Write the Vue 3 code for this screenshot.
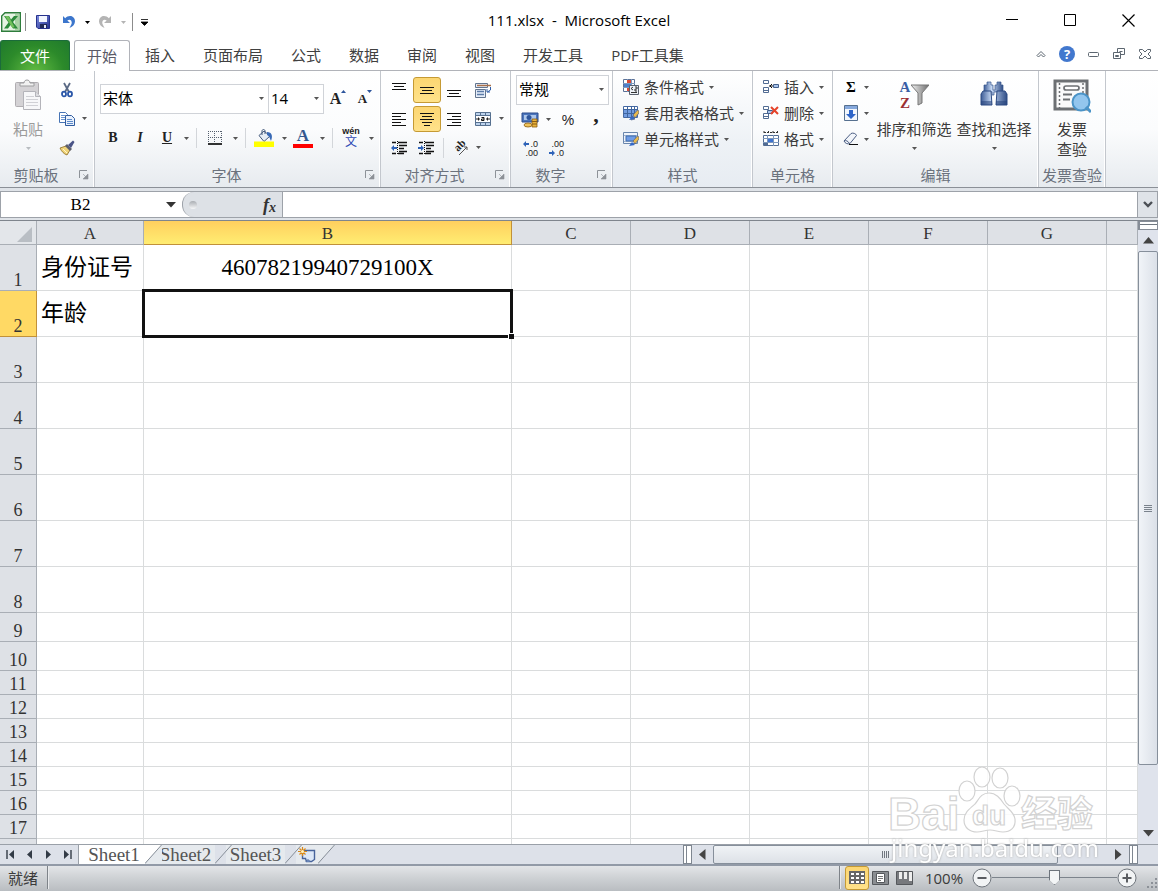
<script setup>
import { ref } from 'vue'

const tabs = ['插入', '页面布局', '公式', '数据', '审阅', '视图', '开发工具', 'PDF工具集']
const columns = ['A', 'B', 'C', 'D', 'E', 'F', 'G', '']
const rows = Array.from({ length: 18 }, (_, i) => ({
  n: i + 1,
  label: i < 17 ? i + 1 : '',
  size: i < 8 ? 'tall' : i < 10 ? 'medium' : 'short',
}))
const cells = { A1: '身份证号', B1: '46078219940729100X', A2: '年龄' }
const styleTools = [
  { icon: 'i-cond', label: '条件格式' },
  { icon: 'i-tablefmt', label: '套用表格格式' },
  { icon: 'i-cellstyle', label: '单元格样式' },
]
const cellTools = [
  { icon: 'i-insert', label: '插入' },
  { icon: 'i-delete', label: '删除' },
  { icon: 'i-format', label: '格式' },
]
const nameBox = ref('B2')
const formula = ref('')
const zoom = ref(50)
</script>

<template>
  <div class="window">
    <svg class="defs" aria-hidden="true">
      <defs>
        <linearGradient id="g-barrel" x1="0" y1="0" x2="1" y2="0"><stop offset="0" stop-color="#3d5c96" /><stop offset=".4" stop-color="#c5d8f4" /><stop offset="1" stop-color="#2f4d86" /></linearGradient>
        <linearGradient id="g-funnel" x1="0" y1="0" x2="1" y2="0"><stop offset="0" stop-color="#f2f2f2" /><stop offset="1" stop-color="#6c6c6c" /></linearGradient>
        <linearGradient id="g-save" x1="0" y1="0" x2="1" y2="1"><stop offset="0" stop-color="#7f8ee0" /><stop offset="1" stop-color="#23318f" /></linearGradient>
      </defs>
      <symbol id="i-caret" viewBox="0 0 5 3"><path d="M0 0h5L2.500 3z" fill="currentColor" /></symbol>
      <symbol id="i-launch" viewBox="0 0 10 10"><path d="M.5 8V.5H8" fill="none" stroke="#8d9298" /><path d="M4 4l3 3M9 4v5H4z" fill="#8d9298" stroke="#8d9298" stroke-width=".6" /></symbol>
      <symbol id="i-excel" viewBox="0 0 20 20">
        <path d="M4 .7h15.300v18.600H.7V4z" fill="#e6f3e3" stroke="#2e7d3c" stroke-width="1.400" />
        <path d="M14 2h4v16h-4z" fill="#a9d3a5" />
        <path d="M3 4h5l2 3.500L13 4h4l-5 6 5 6.500h-5L9.500 13 7 16.500H3l4.500-6z" fill="#2c8a3b" />
        <path d="M4 4h3.500l6 11-2 1z" fill="#72bf5c" />
      </symbol>
      <symbol id="i-save" viewBox="0 0 14 14">
        <path d="M.5.5h13v13H2L.5 12z" fill="url(#g-save)" stroke="#27328c" />
        <path d="M3 1h8v6H3z" fill="#f3f6ff" /><path d="M4 9h7v4H4z" fill="#222a55" /><path d="M8 10h2v3H8z" fill="#e6e9f7" />
      </symbol>
      <symbol id="i-undo" viewBox="0 0 14 14"><path d="M1 1v7h7L5.300 5.500C8 3.500 10.500 5.500 9.500 9L7.500 13c5-1.500 6.800-6.500 4.500-10C10 0 5.500.4 3.200 3.300z" fill="currentColor" /></symbol>
      <symbol id="i-cut" viewBox="0 0 16 16">
        <path d="M5 1l5 9M11 1L6 10" stroke="#5b6a85" stroke-width="1.800" fill="none" />
        <ellipse cx="5" cy="12" rx="2" ry="2.400" fill="none" stroke="#2a56a8" stroke-width="1.800" /><ellipse cx="11" cy="12" rx="2" ry="2.400" fill="none" stroke="#2a56a8" stroke-width="1.800" />
      </symbol>
      <symbol id="i-copy" viewBox="0 0 16 16">
        <path d="M.5 1.500h6l2 2v8h-8z" fill="#fff" stroke="#4774b5" /><path d="M2 4.500h4M2 6.500h4M2 8.500h4" stroke="#6c95cf" />
        <path d="M6.500 4.500h6l3 3v7h-9z" fill="#e9f1fc" stroke="#315c9f" /><path d="M8 8.500h5M8 10.500h6M8 12.500h6" stroke="#5d8aca" />
      </symbol>
      <symbol id="i-brush" viewBox="0 0 16 16">
        <path d="M1 8l6-2 4 4-3 5c-3-1-5.500-3.500-7-7z" fill="#f0d479" stroke="#8a6b23" stroke-width=".8" />
        <path d="M6 6l2-2 5 5-2 2z" fill="#5c5f6d" /><path d="M9 5l5-4.500 1.500 1.500L12 8z" fill="#4a5487" /><path d="M4 9l4 4" stroke="#fff6ce" />
      </symbol>
      <symbol id="i-paste" viewBox="0 0 28 32">
        <rect x="1.500" y="3.500" width="23" height="24" rx="1" fill="#d4d2d5" stroke="#b0adb1" />
        <path d="M6 7V4h4c0-4 6-4 6 0h4v3z" fill="#f1f1f1" stroke="#9d9d9f" />
        <path d="M9.500 12.500h12l5 5v13h-17z" fill="#f7f7f9" stroke="#b4b4ba" /><path d="M21.500 12.500v5h5" fill="#dcdce0" stroke="#b4b4ba" />
        <path d="M12 17.500h8M12 20.500h12M12 23.500h12M12 26.500h12" stroke="#d0d0d5" />
      </symbol>
      <symbol id="i-up" viewBox="0 0 5 3"><path d="M0 3h5L2.500 0z" fill="#2d559c" /></symbol>
      <symbol id="i-border" viewBox="0 0 14 14"><path d="M0 .5h14M0 6.500h14M.5 0v12M6.500 0v12M13.500 0v12" stroke="#55606e" stroke-dasharray="1 1" /><path d="M0 13h14" stroke="#000" stroke-width="1.600" /></symbol>
      <symbol id="i-fill" viewBox="0 0 20 18">
        <path d="M5 6.500L10 2l6 5-6 5.500z" fill="#e6edf5" stroke="#43597a" /><path d="M8 6V2c0-2 3-2 3 0v3" fill="none" stroke="#43597a" />
        <path d="M13 3c5 0 6 4 4 9-1.500-3-1.500-5-4-6z" fill="#3869b5" /><path d="M0 12.500h20V18H0z" fill="#ffff00" />
      </symbol>
      <symbol id="i-lines-c" viewBox="0 0 14 14"><path d="M0 1.500h14M2 4.500h10M0 7.500h14M2 10.500h10M4 13.500h6" stroke="#111" /></symbol>
      <symbol id="i-lines-l" viewBox="0 0 14 14"><path d="M0 1.500h14M0 4.500h9M0 7.500h14M0 10.500h9M0 13.500h14" stroke="#111" /></symbol>
      <symbol id="i-lines-r" viewBox="0 0 14 14"><path d="M0 1.500h14M5 4.500h9M0 7.500h14M5 10.500h9M0 13.500h14" stroke="#111" /></symbol>
      <symbol id="i-top" viewBox="0 0 14 14"><path d="M0 .5h14M2 3.500h10M0 6.500h14" stroke="#111" /></symbol>
      <symbol id="i-mid" viewBox="0 0 14 14"><path d="M0 4.500h14M2 7.500h10M0 10.500h14" stroke="#111" /></symbol>
      <symbol id="i-bot" viewBox="0 0 14 14"><path d="M0 7.500h14M2 10.500h10M0 13.500h14" stroke="#111" /></symbol>
      <symbol id="i-wrap" viewBox="0 0 16 16">
        <path d="M.5 1.500h12v4H.5z" fill="#e6eefa" stroke="#63758f" /><path d="M2 3.500h14" stroke="#a9704a" stroke-width="1.500" /><path d="M.5 7.500h10v8H.5z" fill="#e6eefa" stroke="#63758f" />
        <path d="M2 9.500h7M2 12.500h7" stroke="#5c7ba8" stroke-width="1.500" /><path d="M15.500 5v3l-3 2M12 7v3h3" fill="none" stroke="#2f5da8" />
      </symbol>
      <symbol id="i-merge" viewBox="0 0 16 16">
        <path d="M.5 1.500h15v13H.5z" fill="#bcd2ec" stroke="#56708f" /><path d="M1 5h14v6H1z" fill="#fff" /><path d="M5.500 2v3M10.500 2v3M5.500 11v3M10.500 11v3M1 4.500h14M1 11.500h14" stroke="#56708f" />
        <path d="M1 8h3M12 8h3" stroke="#222" /><path d="M3 6l2 2-2 2zM13 6l-2 2 2 2z" fill="#222" /><path d="M6.500 6.500h2.500v3H6.500V8H9" fill="none" stroke="#111" />
      </symbol>
      <symbol id="i-outdent" viewBox="0 0 16 14"><path d="M1 1.500h4M7 1.500h9M8 4.500h8M8 7.500h5M8 10.500h8M1 12.500h4M7 12.500h6" stroke="#111" stroke-width="1.400" /><path d="M6.500 0v14" stroke="#111" stroke-dasharray="1 1" /><path d="M0 7l3-3v2h3v2H3v2z" fill="#2e63b8" /></symbol>
      <symbol id="i-indent" viewBox="0 0 16 14"><path d="M1 1.500h4M7 1.500h9M8 4.500h8M8 7.500h5M8 10.500h8M1 12.500h4M7 12.500h6" stroke="#111" stroke-width="1.400" /><path d="M6.500 0v14" stroke="#111" stroke-dasharray="1 1" /><path d="M6 7L3 4v2H0v2h3v2z" fill="#2e63b8" /></symbol>
      <symbol id="i-money" viewBox="0 0 18 18">
        <path d="M1 2h16v9H1z" fill="#4c76bd" stroke="#2a4a8c" /><path d="M3 4h12v5H3z" fill="#adc6ea" /><ellipse cx="8" cy="6.500" rx="2.500" ry="2.500" fill="#2d559c" />
        <path d="M11 8h5v8h-5z" fill="#e9b33c" stroke="#8a5d12" stroke-width=".8" /><path d="M11 10.500h5M11 13h5" stroke="#8a5d12" /><ellipse cx="7" cy="14" rx="4" ry="2" fill="#eec25a" stroke="#8a5d12" stroke-width=".8" />
      </symbol>
      <symbol id="i-left" viewBox="0 0 6 6"><path d="M0 3l3-3v2h3v2H3v2z" fill="#2e63b8" /></symbol>
      <symbol id="i-right" viewBox="0 0 6 6"><path d="M6 3L3 0v2H0v2h3v2z" fill="#2e63b8" /></symbol>
      <symbol id="i-cond" viewBox="0 0 16 16">
        <path d="M.5.5h11v12H.5z" fill="#fff" stroke="#5b7196" /><path d="M4.500 0v13M8.500 0v13M0 4.500h12M0 8.500h12" stroke="#7e9abf" /><path d="M4 1h4v3H4zM4 9h3v3H4z" fill="#d94a35" /><path d="M1 5h7v3H1z" fill="#4d7fcb" />
        <path d="M6.500 6.500h9v9h-9z" fill="#edf1f7" stroke="#59616e" /><path d="M10 8l-2 1.500 2 1.500M12 8h2v2h-2v2h2M8 13.500h6" fill="none" stroke="#333" />
      </symbol>
      <symbol id="i-tablefmt" viewBox="0 0 16 16">
        <path d="M.5 1.500h14v11H.5z" fill="#fff" stroke="#4468a3" /><path d="M1 5h13v7H1z" fill="#709be0" /><path d="M4.500 1v12M8.500 1v12M11.500 1v12M0 4.500h15M0 8.500h15" stroke="#3f659f" />
        <path d="M8 15l1-4 3 3zM10 10l4.500-5 1.500 1v2l-4 5z" fill="#e9b94c" stroke="#4d5e80" stroke-width=".7" /><path d="M6 15l3-4 3 3z" fill="#3267c8" />
      </symbol>
      <symbol id="i-cellstyle" viewBox="0 0 16 16">
        <path d="M.5 1.500h14v11H.5z" fill="#eff4fb" stroke="#6986ad" /><path d="M1 4.500h13M1 10.500h13" stroke="#9eb2cc" /><path d="M3 5h10v5H3z" fill="#6f9ce5" stroke="#3f6cae" />
        <path d="M10 10l4.500-5 1.500 1v2l-4 5z" fill="#e9b94c" stroke="#4d5e80" stroke-width=".7" /><path d="M6 15l3-4 3 3z" fill="#3267c8" />
      </symbol>
      <symbol id="i-insert" viewBox="0 0 16 16"><path d="M.5 1.500h5v3h-5zM.5 8.500h5v5h-5zM.5 11.500h5" fill="#fff" stroke="#526c93" /><path d="M10.500 5.500h5v3h-5z" fill="#a9c4ec" stroke="#44618c" /><path d="M6 7h4M9 5L7 7l2 2" fill="none" stroke="#111" /></symbol>
      <symbol id="i-delete" viewBox="0 0 16 16"><path d="M.5 1.500h5v3h-5zM.5 8.500h5v5h-5zM.5 11.500h5" fill="#fff" stroke="#526c93" /><path d="M4.500 5.500h5v3h-5z" fill="#a9c4ec" stroke="#44618c" /><path d="M8 2l7 7M15 2L8 9" stroke="#e5432a" stroke-width="2" /></symbol>
      <symbol id="i-format" viewBox="0 0 16 16"><path d="M1 0v3M5.500 0v3M10 0v3M14.500 0v3M1 1.500h14" stroke="#333" stroke-dasharray="2 1" /><path d="M.5 4.500h15v10H.5z" fill="#fff" stroke="#526c93" /><path d="M4.500 4v11M10.500 4v11M0 7.500h16M0 11.500h16" stroke="#7d97bb" /><path d="M5 8h5v3H5z" fill="#3f74d0" /><path d="M1 12h4v3H1z" fill="#526c93" /></symbol>
      <symbol id="i-filldown" viewBox="0 0 14 16"><path d="M.5.5h13v15H.5z" fill="#f2f6fc" stroke="#56708f" /><path d="M1 1h12v3H1z" fill="#86a9dd" /><path d="M5 5h4v4h3l-5 5-5-5h3z" fill="#2e65c9" /></symbol>
      <symbol id="i-eraser" viewBox="0 0 16 14"><path d="M1 9l7-7.500c2-1 5 0 5.500 2L7 11.500c-2 1-5 0-6-2.500z" fill="#f2f5fa" stroke="#4a5d83" /><path d="M1 9c2-1 4 0 5.500 2.500" fill="none" stroke="#4a5d83" /><path d="M6 12.500h9" stroke="#111" /></symbol>
      <symbol id="i-funnel" viewBox="0 0 18 22"><path d="M0 1h18l-7 8v10l-4 2V9z" fill="url(#g-funnel)" stroke="#777" /></symbol>
      <symbol id="i-binoc" viewBox="0 0 28 26">
        <path d="M7 1h4v3h2v5h2V4h2V1h4v3h2v7h-9v3h-2v-3H4V4h3z" fill="url(#g-barrel)" stroke="#38578e" stroke-width=".7" />
        <path d="M3 10h8l1 14H1V13zM17 10h8l2 3v11H16z" fill="url(#g-barrel)" stroke="#2d4b83" /><path d="M1 20h11v4H1zM16 20h11v4H16z" fill="#27447c" opacity=".55" />
      </symbol>
      <symbol id="i-invoice" viewBox="0 0 38 34">
        <path d="M2 2h32v28H2z" fill="#fafafa" stroke="#6d7073" stroke-width="3" /><path d="M6.500 4v25M30 4v12" stroke="#6d7073" stroke-width="1.500" stroke-dasharray="2 2" />
        <rect x="11" y="7" width="15" height="4" rx="2" fill="#fff" stroke="#6d7073" stroke-width="1.700" /><path d="M10 15.500h9M10 20.500h7" stroke="#6d7073" stroke-width="2" />
        <circle cx="28" cy="23" r="8.500" fill="#93c6ee" stroke="#4b94c8" stroke-width="2" /><path d="M33 28l5 5" stroke="#4b94c8" stroke-width="3" />
      </symbol>
    </svg>

    <header class="titlebar">
      <div class="quick">
        <svg class="excel"><use href="#i-excel" /></svg>
        <i class="qsep"></i>
        <button class="q" aria-label="保存"><svg class="s14"><use href="#i-save" /></svg></button>
        <button class="q blue" aria-label="撤消"><svg class="s14"><use href="#i-undo" /></svg></button>
        <button class="qc" aria-label="撤消列表"><svg class="caret"><use href="#i-caret" /></svg></button>
        <button class="q grey" aria-label="恢复"><svg class="s14 flip"><use href="#i-undo" /></svg></button>
        <button class="qc grey" aria-label="恢复列表"><svg class="caret"><use href="#i-caret" /></svg></button>
        <i class="qsep"></i>
        <button class="qc bar" aria-label="自定义快速访问工具栏"><svg width="7" height="7"><path d="M0 .5h7M0 3h7L3.500 6.500z" fill="#000" stroke="#000" stroke-width=".8" /></svg></button>
      </div>
      <div class="title">111.xlsx&nbsp; -&nbsp; Microsoft Excel</div>
      <div class="winbtns">
        <button aria-label="最小化"><svg width="13" height="13"><path d="M0 5.500h12" stroke="#000" /></svg></button>
        <button aria-label="最大化"><svg width="13" height="13"><path d="M.5.5h11v11H.5z" fill="none" stroke="#000" /></svg></button>
        <button aria-label="关闭"><svg width="13" height="13"><path d="M.5.5l12 12M12.500.5l-12 12" stroke="#000" stroke-width="1.200" /></svg></button>
      </div>
    </header>

    <nav class="tabs">
      <button class="file">文件</button>
      <button class="tab active">开始</button>
      <button v-for="t in tabs" :key="t" class="tab">{{ t }}</button>
      <div class="tabright">
        <button aria-label="功能区最小化"><svg width="10" height="8"><path d="M1 5.500l4-4 4 4-1.500 1.500L5 4.500 2.500 7z" fill="#fff" stroke="#5c6670" /></svg></button>
        <button aria-label="帮助" class="help">?</button>
        <button aria-label="最小化工作簿"><svg width="11" height="8"><rect x=".5" y="2.500" width="10" height="4" rx="1" fill="#fff" stroke="#5c6670" /></svg></button>
        <button aria-label="还原工作簿"><svg width="12" height="12"><path d="M4.500.5h7v6h-7zM6.500 3.500h3" fill="#fff" stroke="#5c6670" /><path d="M.5 4.500h7v6h-7z" fill="#fff" stroke="#5c6670" /><path d="M2.500 7.500h3v1h-3z" fill="none" stroke="#5c6670" /></svg></button>
        <button aria-label="关闭工作簿"><svg width="12" height="10"><path d="M.5.5h3L6 3 8.500.5h3v2L9 5l2.500 2.500v2h-3L6 7 3.500 9.500h-3v-2L3 5 .5 2.500z" fill="#fff" stroke="#5c6670" /></svg></button>
      </div>
    </nav>

    <section class="ribbon">
      <div class="group g-clip">
        <div class="body">
          <button class="big paste"><svg class="pasteicon"><use href="#i-paste" /></svg><span>粘贴</span><svg class="caret"><use href="#i-caret" /></svg></button>
          <div class="clipcol">
            <div class="line"><button class="t26" aria-label="剪切"><svg class="s16"><use href="#i-cut" /></svg></button></div>
            <div class="line"><button class="t26" aria-label="复制"><svg class="s16"><use href="#i-copy" /></svg></button><button class="tc narrow" aria-label="复制选项"><svg class="caret"><use href="#i-caret" /></svg></button></div>
            <div class="line"><button class="t26" aria-label="格式刷"><svg class="s16"><use href="#i-brush" /></svg></button></div>
          </div>
        </div>
        <div class="cap"><span>剪贴板</span><button aria-label="剪贴板选项"><svg class="launch"><use href="#i-launch" /></svg></button></div>
      </div>

      <div class="group g-font">
        <div class="body fontbody">
          <div class="line combos">
            <label class="combo fontname"><select aria-label="字体"><option>宋体</option></select><svg class="caret"><use href="#i-caret" /></svg></label>
            <label class="combo fontsize"><select aria-label="字号"><option>14</option></select><svg class="caret"><use href="#i-caret" /></svg></label>
            <button class="t28 serif grow" aria-label="增大字号">A<svg class="up"><use href="#i-up" /></svg></button>
            <button class="t26 serif shrink" aria-label="减小字号">A<svg class="up down"><use href="#i-up" /></svg></button>
          </div>
          <div class="line fontline">
            <button class="t26 serif b">B</button>
            <button class="t28 serif it">I</button>
            <button class="t26 serif u">U</button>
            <button class="tc" aria-label="下划线选项"><svg class="caret"><use href="#i-caret" /></svg></button>
            <i class="vsep"></i>
            <button class="t28" aria-label="边框"><svg class="s14"><use href="#i-border" /></svg></button>
            <button class="tc" aria-label="边框选项"><svg class="caret"><use href="#i-caret" /></svg></button>
            <i class="vsep"></i>
            <button class="t28" aria-label="填充颜色"><svg class="fillicon"><use href="#i-fill" /></svg></button>
            <button class="tc" aria-label="填充颜色选项"><svg class="caret"><use href="#i-caret" /></svg></button>
            <button class="t26" aria-label="字体颜色"><span class="fontcolor">A</span></button>
            <button class="tc" aria-label="字体颜色选项"><svg class="caret"><use href="#i-caret" /></svg></button>
            <i class="vsep"></i>
            <button class="t28 wen" aria-label="拼音"><span>wén</span><b>文</b></button>
            <button class="tc" aria-label="拼音选项"><svg class="caret"><use href="#i-caret" /></svg></button>
          </div>
        </div>
        <div class="cap"><span>字体</span><button aria-label="字体选项"><svg class="launch"><use href="#i-launch" /></svg></button></div>
      </div>

      <div class="group g-align">
        <div class="body alignbody">
          <div class="line">
            <button class="t28" aria-label="顶端对齐"><svg class="s14"><use href="#i-top" /></svg></button>
            <button class="t28 on" aria-label="垂直居中"><svg class="s14"><use href="#i-mid" /></svg></button>
            <button class="t26" aria-label="底端对齐"><svg class="s14"><use href="#i-bot" /></svg></button>
            <button class="t28 apart" aria-label="自动换行"><svg class="s16"><use href="#i-wrap" /></svg></button>
          </div>
          <div class="line">
            <button class="t28" aria-label="左对齐"><svg class="s14"><use href="#i-lines-l" /></svg></button>
            <button class="t28 on" aria-label="居中"><svg class="s14"><use href="#i-lines-c" /></svg></button>
            <button class="t26" aria-label="右对齐"><svg class="s14"><use href="#i-lines-r" /></svg></button>
            <button class="t28 apart" aria-label="合并后居中"><svg class="s16"><use href="#i-merge" /></svg></button>
            <button class="tc narrow" aria-label="合并选项"><svg class="caret"><use href="#i-caret" /></svg></button>
          </div>
          <div class="line">
            <button class="t28" aria-label="减少缩进量"><svg class="indent"><use href="#i-outdent" /></svg></button>
            <button class="t26" aria-label="增加缩进量"><svg class="indent"><use href="#i-indent" /></svg></button>
            <i class="vsep"></i>
            <button class="t26" aria-label="方向"><svg width="18" height="18" overflow="visible"><text transform="translate(6 13) rotate(-45)" font-size="11" font-weight="bold" font-family="Liberation Serif, serif" fill="#222">ab</text><path d="M7 16L15 8M12 8h3v3" fill="none" stroke="#555" /></svg></button>
            <button class="tc narrow" aria-label="方向选项"><svg class="caret"><use href="#i-caret" /></svg></button>
          </div>
        </div>
        <div class="cap"><span>对齐方式</span><button aria-label="对齐选项"><svg class="launch"><use href="#i-launch" /></svg></button></div>
      </div>

      <div class="group g-num">
        <div class="body numbody">
          <label class="combo numfmt"><select aria-label="数字格式"><option>常规</option></select><svg class="caret"><use href="#i-caret" /></svg></label>
          <div class="line">
            <button class="t28" aria-label="会计数字格式"><svg class="s18"><use href="#i-money" /></svg></button>
            <button class="tc narrow" aria-label="会计格式选项"><svg class="caret"><use href="#i-caret" /></svg></button>
            <button class="t28 apart pct">%</button>
            <button class="t28 comma serif">,</button>
          </div>
          <div class="line">
            <button class="t26 dec" aria-label="增加小数位数"><span><svg class="arr"><use href="#i-left" /></svg>.0</span><span>.00</span></button>
            <button class="t26 dec" aria-label="减少小数位数"><span>.00</span><span><svg class="arr"><use href="#i-right" /></svg>.0</span></button>
          </div>
        </div>
        <div class="cap"><span>数字</span><button aria-label="数字选项"><svg class="launch"><use href="#i-launch" /></svg></button></div>
      </div>

      <div class="group g-style">
        <div class="body list">
          <button v-for="s in styleTools" :key="s.label" class="item"><svg class="s16"><use :href="'#' + s.icon" /></svg><span>{{ s.label }}</span><svg class="caret"><use href="#i-caret" /></svg></button>
        </div>
        <div class="cap"><span>样式</span></div>
      </div>

      <div class="group g-cell">
        <div class="body list">
          <button v-for="s in cellTools" :key="s.label" class="item"><svg class="s16"><use :href="'#' + s.icon" /></svg><span>{{ s.label }}</span><svg class="caret"><use href="#i-caret" /></svg></button>
        </div>
        <div class="cap"><span>单元格</span></div>
      </div>

      <div class="group g-edit">
        <div class="body">
          <div class="list editlist">
            <button class="item" aria-label="自动求和"><b class="sigma">Σ</b><svg class="caret"><use href="#i-caret" /></svg></button>
            <button class="item" aria-label="填充"><svg class="s16"><use href="#i-filldown" /></svg><svg class="caret"><use href="#i-caret" /></svg></button>
            <button class="item" aria-label="清除"><svg class="s16"><use href="#i-eraser" /></svg><svg class="caret"><use href="#i-caret" /></svg></button>
          </div>
          <button class="big wide"><span class="sort"><span class="az"><b>A</b><b class="z">Z</b></span><svg class="funnel"><use href="#i-funnel" /></svg></span><span>排序和筛选</span><svg class="caret"><use href="#i-caret" /></svg></button>
          <button class="big wide"><svg class="binoc"><use href="#i-binoc" /></svg><span>查找和选择</span><svg class="caret"><use href="#i-caret" /></svg></button>
        </div>
        <div class="cap"><span>编辑</span></div>
      </div>

      <div class="group g-inv">
        <div class="body"><button class="big inv"><svg class="invicon"><use href="#i-invoice" /></svg><span>发票<br />查验</span></button></div>
        <div class="cap"><span>发票查验</span></div>
      </div>
    </section>

    <div class="formulabar">
      <div class="namebox"><input v-model="nameBox" aria-label="名称框" /><button aria-label="名称列表"><svg width="10" height="6"><path d="M0 0h10L5 5.500z" fill="#333" /></svg></button></div>
      <div class="fxwrap"><div class="fx"><i class="dot"></i><button aria-label="插入函数"><i>f</i><sub>x</sub></button></div></div>
      <input v-model="formula" class="formula" aria-label="编辑栏" />
      <button class="expand" aria-label="展开编辑栏"><svg width="10" height="7"><path d="M1 1l4 4 4-4" fill="none" stroke="#4b4f55" stroke-width="2.400" /></svg></button>
    </div>

    <main class="sheet">
      <div class="gridwrap">
        <table class="grid">
          <colgroup><col class="c-head" /><col class="c-a" /><col class="c-b" /><col v-for="i in 5" :key="i" class="c-std" /><col /></colgroup>
          <thead>
            <tr>
              <th class="corner"><svg width="15" height="15"><path d="M15 0v15H0z" fill="#b9bec4" /></svg></th>
              <th v-for="c in columns" :key="c" :class="{ sel: c === 'B' }">{{ c }}</th>
            </tr>
          </thead>
          <tbody>
            <tr v-for="r in rows" :key="r.n" :class="r.size">
              <th :class="{ sel: r.n === 2 }">{{ r.label }}</th>
              <td v-for="c in columns" :key="c" :class="{ center: c === 'B' }">
                {{ cells[c + r.n] || '' }}<span v-if="c + r.n === 'B2'" class="cursor"><i></i></span>
              </td>
            </tr>
          </tbody>
        </table>
      </div>
      <div class="vscroll">
        <div class="vsplit"></div>
        <button class="arrow" aria-label="向上滚动"><svg width="11" height="7"><path d="M0 6.500h11L5.500 0z" fill="#444" /></svg></button>
        <div class="vtrack"><div class="vthumb"><i></i><i></i><i></i><i></i></div></div>
        <button class="arrow" aria-label="向下滚动"><svg width="11" height="7"><path d="M0 0h11L5.500 6.500z" fill="#444" /></svg></button>
      </div>
    </main>

    <div class="bottom">
      <div class="navbtns">
        <button aria-label="第一张"><svg width="9" height="9"><path d="M1 0v9" stroke="#333b46" stroke-width="1.400" /><path d="M8 0v9L3 4.500z" fill="#333b46" /></svg></button>
        <button aria-label="上一张"><svg width="9" height="9"><path d="M7 0v9L2 4.500z" fill="#333b46" /></svg></button>
        <button aria-label="下一张"><svg width="9" height="9"><path d="M2 0v9l5-4.500z" fill="#333b46" /></svg></button>
        <button aria-label="最后一张"><svg width="9" height="9"><path d="M8 0v9" stroke="#333b46" stroke-width="1.400" /><path d="M1 0v9l5-4.500z" fill="#333b46" /></svg></button>
      </div>
      <div class="sheettabs">
        <button class="st first">Sheet1</button>
        <svg class="slant"><path d="M0 0h17L0 18z" fill="#fff" /><path d="M17 0v19H0z" fill="#e6eaee" /><path d="M0 18.500L16.500 0" stroke="#858d97" fill="none" /></svg>
        <button class="st">Sheet2</button>
        <svg class="slant"><path d="M0 18.500L16.500 0" stroke="#858d97" fill="none" /></svg>
        <button class="st">Sheet3</button>
        <svg class="slant"><path d="M0 18.500L16.500 0" stroke="#858d97" fill="none" /></svg>
        <button class="newsheet" aria-label="插入工作表">
          <svg width="18" height="16"><path d="M4.500 3.500h12v9l-3 2h-5l-1-3h-3z" fill="#dce7f7" stroke="#47639b" stroke-width="1.400" /><path d="M8 14.500l2-2 2 2" fill="#88a5d6" stroke="#47639b" /><path d="M4.500 0v9M0 4.500h9M1.500 1.500l6 6M7.500 1.500l-6 6" stroke="#d98818" stroke-width="1.200" /><circle cx="4.500" cy="4.500" r="1.500" fill="#fff3c0" /></svg>
        </button>
        <svg class="slant"><path d="M0 0h17L0 18z" fill="#e6eaee" /><path d="M0 18.500L16.500 0" stroke="#858d97" fill="none" /></svg>
      </div>
      <div class="hscroll">
        <i class="hsplit"></i>
        <button class="harrow" aria-label="向左滚动"><svg width="7" height="11"><path d="M6.500 0v11L0 5.500z" fill="#444" /></svg></button>
        <div class="htrack"><div class="hthumb"><i></i><i></i><i></i><i></i></div></div>
        <button class="harrow" aria-label="向右滚动"><svg width="7" height="11"><path d="M0 0v11l6.500-5.500z" fill="#444" /></svg></button>
        <i class="hsplit"></i>
      </div>
      <div class="hcorner"></div>
    </div>

    <footer class="status">
      <span class="ready">就绪</span><i class="ssep"></i>
      <div class="statusright">
        <i class="ssep"></i>
        <button class="view on" aria-label="普通"><svg width="16" height="13"><path d="M0 0h16v13H0z" fill="#666" /><path d="M2 2h3v2H2zM7 2h3v2H7zM12 2h3v2h-3zM2 6h3v2H2zM7 6h3v2H7zM12 6h3v2h-3zM2 10h3v2H2zM7 10h3v2H7zM12 10h3v2h-3z" fill="#fff" /></svg></button>
        <button class="view" aria-label="页面布局"><svg width="17" height="14"><path d="M.5.5h16v13H.5z" fill="#8b8e92" stroke="#55585c" /><path d="M4.500 2.500h8v9h-8z" fill="#fff" stroke="#55585c" /><path d="M6 5.500h5M6 7.500h5M6 9.500h3" stroke="#777" /></svg></button>
        <button class="view" aria-label="分页预览"><svg width="17" height="14"><path d="M.5.5h16v13H.5z" fill="#77797d" stroke="#55585c" /><path d="M3 1h3v7H3zM8 1h3v7H8zM13 1h3v9h-3z" fill="#eee" /></svg></button>
        <span class="pct100">100%</span>
        <button class="round" aria-label="缩小"><svg width="20" height="20"><circle cx="10" cy="10" r="9" fill="#f2f4f5" stroke="#70767d" /><path d="M5.500 10h9" stroke="#5a5d61" stroke-width="2" /></svg></button>
        <input v-model="zoom" class="range" type="range" min="0" max="100" aria-label="显示比例" />
        <button class="round" aria-label="放大"><svg width="20" height="20"><circle cx="10" cy="10" r="9" fill="#f2f4f5" stroke="#70767d" /><path d="M5.500 10h9M10 5.500v9" stroke="#5a5d61" stroke-width="2" /></svg></button>
        <svg class="grip" width="13" height="13"><path d="M10 1h2v2h-2zM6 5h2v2H6zM10 5h2v2h-2zM2 9h2v2H2zM6 9h2v2H6zM10 9h2v2h-2z" fill="#8c9198" /></svg>
      </div>
    </footer>

    <svg class="watermark" width="215" height="108" viewBox="0 0 215 108">
      <g fill="#fff" fill-opacity=".85" stroke="#d2d2d2" stroke-width="1.200">
        <ellipse cx="82" cy="30" rx="8" ry="10" /><ellipse cx="97" cy="16" rx="8" ry="10" /><ellipse cx="115" cy="17" rx="8" ry="10" /><ellipse cx="127" cy="35" rx="8" ry="10" />
        <path d="M104 32c-8 0-10 6-14 11-6 5-11 9-11 16 0 8 6 12 13 12 5 0 8-2 13-2s8 2 13 2c7 0 13-4 12-13-1-7-7-10-11-15-4-6-8-11-15-11z" />
      </g>
      <g fill="#fff" stroke="#d2d2d2" stroke-width="1.200" font-weight="bold" font-family="Liberation Sans, Noto Sans CJK SC, sans-serif">
        <text x="3" y="69" font-size="46">Bai</text><text x="87" y="64" font-size="28">du</text><text x="136" y="66" font-size="36">经验</text>
      </g>
      <text class="url" x="6" y="96" font-size="24" fill="#fff" font-family="Noto Sans, sans-serif">jingyan.baidu.com</text>
    </svg>
  </div>
</template>

<style>
html, body { margin: 0; background: #fff; }
</style>

<style scoped>
* { box-sizing: border-box; }
.window { position: relative; display: flex; flex-direction: column; height: 100vh; overflow: hidden; background: #fff; color: #3b3b3b; font: 15px/20px "Open Sans", "Noto Sans CJK SC", sans-serif; }
button { display: flex; align-items: center; justify-content: center; padding: 0; border: 0; background: none; color: inherit; font: inherit; white-space: nowrap; }
input, select { border: 0; outline: 0; padding: 0; margin: 0; background: none; color: #000; font: inherit; min-width: 0; appearance: none; border-radius: 0; }
svg { display: block; flex: none; }
.defs { position: absolute; width: 0; height: 0; }
.caret { width: 5px; height: 3px; color: #555; }
.s14 { width: 14px; height: 14px; }
.s16 { width: 16px; height: 16px; }
.s18 { width: 18px; height: 18px; }

.titlebar { display: grid; grid-template-columns: 1fr auto 1fr; align-items: center; flex: 0 0 40px; color: #000; }
.quick { display: flex; align-items: center; height: 40px; padding: 4px 0 0 1px; }
.excel { width: 20px; height: 20px; }
.qsep { width: 1px; height: 18px; margin: 0 4px; background: #8c8c8c; }
.q { width: 26px; height: 22px; }
.q.blue { color: #3c76cc; }
.grey { color: #b4b4b4; }
.flip { transform: scaleX(-1); }
.qc { width: 10px; height: 22px; }
.qc .caret { color: #000; }
.qc.grey .caret { color: #b4b4b4; }
.qc.bar { width: 14px; }
.title { color: #000; }
.winbtns { display: flex; justify-content: flex-end; padding-right: 1px; }
.winbtns button { width: 58px; height: 36px; }

.tabs { display: flex; align-items: flex-start; flex: none; height: 31px; border-bottom: 1px solid #b1b3b9; }
.tab { height: 30px; padding: 0 14px; color: #404040; }
.file { width: 70px; height: 30px; margin-right: 4px; border: 1px solid #1b6b3a; border-bottom: 0; border-radius: 3px 3px 0 0; background: radial-gradient(ellipse at 50% 110%, #63bd43, #2c8a2a 60%, #1f7a2d); color: #fff; }
.tab.active { height: 31px; padding: 0 12px 1px; border: 1px solid #b1b3b9; border-bottom: 0; border-radius: 3px 3px 0 0; background: #fff; color: #5a5a66; margin-right: 1px; }
.tabright { display: flex; align-items: center; margin-left: auto; }
.tabright button { width: 26px; height: 28px; }
.tabright .help { width: 16px; height: 16px; margin: 0 5px; border-radius: 50%; background: #4278ce; color: #fff; font-weight: bold; font-size: 13px; }

.ribbon { display: flex; flex: none; height: 117px; background: linear-gradient(#fff, #fbfcfd 50%, #e7ebef); border-bottom: 1px solid #8b9097; }
.group { display: flex; flex-direction: column; flex: none; border-right: 1px solid #c3c7cd; box-shadow: inset -1px 0 #fff; }
.body { display: flex; flex: 1; }
.cap { position: relative; display: flex; align-items: center; justify-content: center; height: 24px; color: #6b727d; }
.cap button { position: absolute; right: 5px; top: 7px; }
.launch { width: 10px; height: 10px; }
.g-clip { width: 95px; } .g-font { width: 286px; } .g-align { width: 130px; } .g-num { width: 102px; }
.g-style { width: 140px; background: linear-gradient(#fff, #eef2f6 60%, #e7ecf2); } .g-cell { width: 80px; } .g-edit { width: 206px; } .g-inv { width: 67px; }
.g-clip .cap, .g-font .cap, .g-align .cap, .g-num .cap { padding-right: 22px; }
.line { display: flex; align-items: center; height: 29px; }
.t26 { width: 26px; height: 26px; } .t28 { width: 28px; height: 26px; }
.apart { margin-left: 2px; }
.tc { width: 12px; height: 26px; }
.tc.narrow { width: 8px; }
.vsep { width: 1px; height: 20px; margin: 0 4px; background: #d3d6da; }
.serif { font-family: "Liberation Serif", serif; font-weight: bold; color: #222; }

.big { flex-direction: column; justify-content: flex-start; width: 56px; padding-top: 8px; line-height: 20px; }
.big > span:not(.sort) { height: 20px; }
.big .caret { margin-top: 8px; }
.paste { color: #9b9b9b; }
.paste .caret { color: #b8bcc0; }
.pasteicon { width: 28px; height: 32px; margin-bottom: 8px; }
.clipcol { display: flex; flex-direction: column; padding-top: 4px; margin-left: -2px; }

.fontbody { flex-direction: column; padding: 13px 0 0 5px; gap: 10px; }
.combos { height: 30px; }
.combo { display: flex; align-items: center; height: 30px; padding: 0 4px 2px 2px; border: 1px solid #d0d3d8; background: #fff; }
.combo select { flex: 1; height: 24px; }
.fontname { width: 169px; margin-right: -1px; }
.fontsize { width: 56px; }
.grow { font-size: 16px; } .shrink { font-size: 13px; }
.up { width: 5px; height: 3px; align-self: flex-start; margin-top: 4px; }
.down { transform: rotate(180deg); }
.fontline { height: 28px; }
.b, .it, .u { font-size: 14px; }
.it { font-style: italic; }
.u { text-decoration: underline; }
.fillicon { width: 20px; height: 18px; }
.fontcolor { width: 20px; height: 20px; border-bottom: 4px solid #f00; color: #35588f; font: bold 17px/16px "Liberation Serif", serif; }
.wen { flex-direction: column; font: bold 9px/9px "Liberation Sans", "Noto Sans CJK SC", sans-serif; color: #222; }
.wen b { color: #2f49b5; font-size: 12px; line-height: 13px; font-weight: normal; }

.alignbody { flex-direction: column; padding: 4px 0 0 4px; }
.on { border: 1px solid #c59a34; border-radius: 3px; background: linear-gradient(#fcd672, #ffe28a); }
.indent { width: 16px; height: 14px; }
.numbody { flex-direction: column; padding: 4px 0 0 5px; }
.numfmt { width: 93px; }
.pct { color: #222; font-size: 14px; font-family: "Liberation Sans", sans-serif; }
.comma { font-size: 22px; padding-bottom: 10px; }
.dec { flex-direction: column; align-items: flex-end; padding-right: 4px; font: 9px/9px "Liberation Sans", sans-serif; color: #222; }
.dec span { display: flex; align-items: center; gap: 1px; }
.arr { width: 6px; height: 6px; }

.list { flex-direction: column; align-items: flex-start; padding: 3px 0 0 10px; }
.item { height: 26px; gap: 5px; }
.editlist { display: flex; width: 41px; }
.sigma { width: 16px; font: bold 15px/20px "Liberation Serif", serif; color: #000; }
.wide { width: 80px; }
.sort { display: flex; align-items: flex-start; width: 30px; height: 32px; margin-bottom: 8px; }
.az { display: flex; flex-direction: column; font: bold 15px/16px "Liberation Serif", serif; color: #3a5ea5; width: 12px; }
.z { color: #9c2f33; }
.funnel { width: 18px; height: 22px; margin-top: 5px; }
.binoc { width: 28px; height: 26px; margin: 2px 0 12px; }
.inv { width: 66px; }
.invicon { width: 38px; height: 34px; margin-bottom: 6px; }
.inv span { height: 40px; }

.formulabar { display: flex; flex: none; padding: 3px 0 2px; background: #dfe3e8; border-bottom: 1px solid #7f858d; }
.formulabar input { font: 17px/24px "Liberation Serif", "Noto Sans CJK SC", serif; }
.namebox { display: flex; width: 182px; height: 27px; border: 1px solid #9da2a9; border-right: 0; background: #fff; }
.namebox input { flex: 1; text-align: center; }
.namebox button { width: 22px; }
.fxwrap { width: 101px; height: 27px; border: solid #9da2a9; border-width: 1px 1px 1px 0; background: #fff; }
.fx { display: flex; align-items: center; justify-content: space-between; height: 25px; padding: 0 6px; border-left: 1px solid #9da2a9; border-radius: 12px 0 0 12px; background: #dde1e6; }
.dot { width: 8px; height: 8px; border-radius: 50%; background: linear-gradient(#a9adb2, #f7f8f9); }
.fx button { font: italic bold 18px/20px "Liberation Serif", serif; color: #333; }
.fx sub { font-size: 14px; line-height: 12px; padding-top: 6px; }
.formula { flex: 1; height: 27px; border: 1px solid #9da2a9; border-left: 0; background: #fff; }
.expand { width: 20px; height: 27px; border: 1px solid #9da2a9; border-left: 0; }

.sheet { display: flex; flex: 1; min-height: 0; }
.gridwrap { flex: 1; min-width: 0; overflow: hidden; }
.grid { width: 100%; table-layout: fixed; border-collapse: separate; border-spacing: 0; font: 18px/20px "Liberation Serif", "Noto Sans CJK SC", serif; }
.c-head { width: 37px; } .c-a { width: 107px; } .c-b { width: 368px; } .c-std { width: 119px; }
.grid th { padding: 0; border: solid #a9aeb5; border-width: 0 1px 1px 0; background: #dee1e6; color: #333; font-weight: normal; }
.grid thead th { height: 24px; padding-top: 3px; font-size: 17px; }
.grid thead .sel { background: linear-gradient(#ffcf5e, #ffed72); border-color: #c1913a; }
.grid .corner { background: #e3e6ea; }
.corner svg { margin: 0 4px 0 auto; }
.tall { height: 46px; } .medium { height: 29px; } .short { height: 24px; }
.grid tbody th { vertical-align: bottom; }
.grid tbody .sel { background: #ffd964; border-color: #c1913a; }
.grid td { position: relative; padding: 0 0 0 4px; border: solid #dadcdd; border-width: 0 1px 1px 0; color: #000; font-size: 23px; }
.grid td.center { padding: 0; text-align: center; }
.cursor { position: absolute; z-index: 1; inset: -2px; border: 3px solid #111; }
.cursor i { position: absolute; right: -4px; bottom: -4px; width: 6px; height: 6px; border: solid #fff; border-width: 1px 0 0 1px; background: #111; }

.vscroll { display: flex; flex-direction: column; width: 20px; background: #dfe3ec; }
.vsplit { height: 9px; border: 2px solid #868d97; border-width: 1px 1px 1px 2px; background: linear-gradient(#fff 30%, #6f7780 30%, #6f7780 50%, #fff 50%); }
.arrow { flex: 0 0 21px; width: 20px; }
.vtrack { flex: 1; padding-bottom: 58px; }
.vthumb { display: flex; flex-direction: column; align-items: center; justify-content: center; gap: 1px; height: 100%; border: 1px solid #868f9b; border-radius: 2px; background: linear-gradient(90deg, #f1f4f8, #dbe0e8); }
.vthumb i { width: 8px; height: 1px; background: #7a828c; }

.bottom { display: flex; flex: 0 0 22px; border-top: 1px solid #9aa0a8; border-bottom: 2px solid #929aa7; background: #dde1e9; }
.navbtns { display: flex; width: 79px; padding-left: 1px; border-right: 1px solid #9aa0a8; }
.navbtns button { width: 19px; }
.sheettabs { display: flex; color: #555; font: 19px/19px "Liberation Serif", serif; }
.st, .newsheet { height: 19px; background: #e6eaee; }
.st { width: 59px; }
.first { width: 66px; padding-left: 4px; background: #fff; }
.slant { width: 17px; height: 19px; margin-right: -6px; position: relative; }
.newsheet { width: 22px; }
.hscroll { display: flex; width: 455px; margin-left: auto; }
.hsplit { width: 9px; height: 19px; border: 1px solid #7f8791; background: linear-gradient(90deg, #fff 30%, #7f8791 30%, #7f8791 45%, #fff 45%); }
.harrow { width: 21px; }
.htrack { flex: 1; padding-right: 50px; }
.hthumb { display: flex; align-items: center; justify-content: center; gap: 1px; height: 19px; border: 1px solid #868f9b; border-radius: 2px; background: linear-gradient(#f0f3f6, #dde1e7); }
.hthumb i { width: 1px; height: 7px; background: #70777f; }
.hcorner { width: 20px; }

.status { display: flex; align-items: center; flex: none; height: 25px; padding-bottom: 2px; background: linear-gradient(#e3e5e8, #cfd2d5 45%, #b9bdc1); }
.ready { padding: 0 9px 0 8px; }
.ssep { width: 2px; height: 23px; background: #7e8389; border-right: 1px solid #e8eaec; }
.statusright { display: flex; align-items: center; margin-left: auto; }
.view { width: 24px; height: 24px; }
.view.on { margin-left: 4px; margin-right: -1px; }
.pct100 { width: 56px; text-align: center; }
.round { width: 20px; height: 20px; }
.range { width: 125px; height: 20px; background: linear-gradient(#7d848c, #7d848c) center / 100% 1px no-repeat; }
.range::-webkit-slider-thumb { appearance: none; width: 11px; height: 15px; background: #6d747c; clip-path: polygon(0 0, 100% 0, 100% 65%, 50% 100%, 0 65%); box-shadow: inset 0 0 0 1px #6d747c, inset 0 0 0 9px #f3f5f6; }
.grip { align-self: flex-end; margin-left: 8px; }
.watermark { position: absolute; right: 58px; bottom: 22px; pointer-events: none; }
.url { filter: drop-shadow(0 0 1px #aaa); }
</style>
